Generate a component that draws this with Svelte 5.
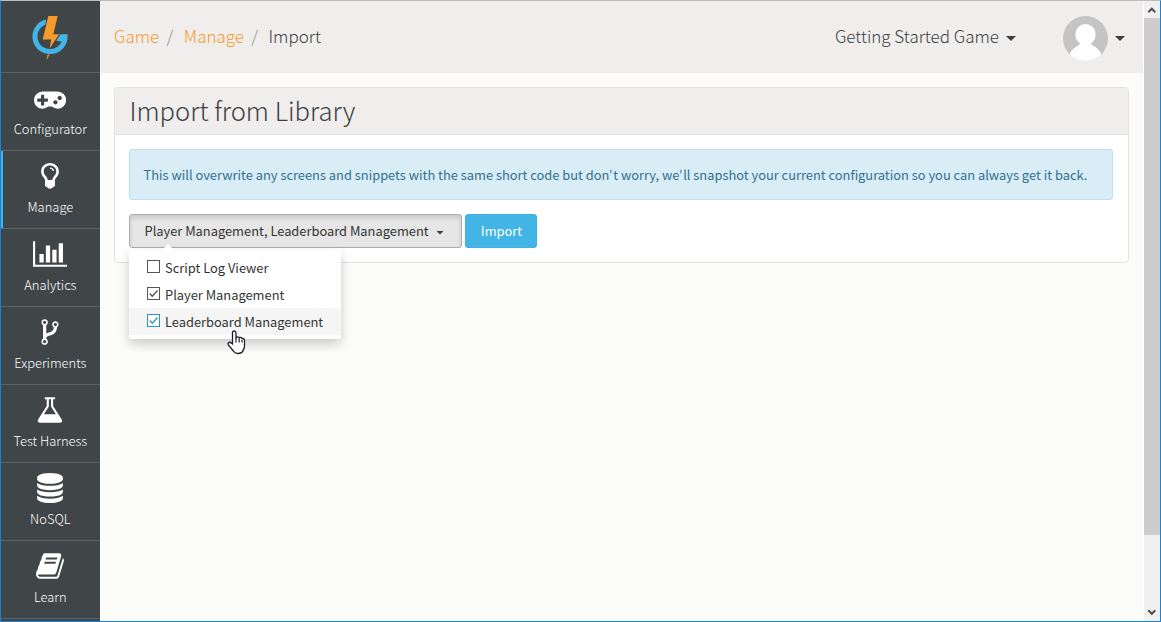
<script>
  const gamepad = 'M832 1088v-128q0-14-9-23t-23-9h-192v-192q0-14-9-23t-23-9h-128q-14 0-23 9t-9 23v192h-192q-14 0-23 9t-9 23v128q0 14 9 23t23 9h192v192q0 14 9 23t23 9h128q14 0 23-9t9-23v-192h192q14 0 23-9t9-23zm576 64q0-53-37.5-90.5t-90.5-37.5-90.5 37.5-37.5 90.5 37.5 90.5 90.5 37.5 90.5-37.5 37.5-90.5zm256-256q0-53-37.5-90.5t-90.5-37.5-90.5 37.5-37.5 90.5 37.5 90.5 90.5 37.5 90.5-37.5 37.5-90.5zm256 128q0 212-150 362t-362 150q-192 0-338-128h-220q-146 128-338 128-212 0-362-150t-150-362 150-362 362-150h896q212 0 362 150t150 362z';
  const bulb = 'M896 120c-300 0-530 215-530 500 0 150 60 240 130 330 65 85 105 150 115 240q-15 30-15 70v190q0 60 60 85l60 25q40 100 180 100t180-100l60-25q60-25 60-85v-190q0-40-15-70c10-90 50-155 115-240 70-90 130-180 130-330 0-285-230-500-530-500zm0 150c215 0 375 150 375 350 0 110-45 175-105 250-65 85-115 150-130 260h-280c-15-110-65-175-130-260-60-75-105-140-105-250 0-200 160-350 375-350zm10 120v75q125 10 160 125h75q-30-190-235-200z';
  const chart = 'M640 896v512h-256v-512h256zm384-512v1024h-256v-1024h256zm1024 1152v128h-2048v-1536h128v1408h1920zm-640-896v768h-256v-768h256zm384-384v1152h-256v-1152h256z';
  const fork = 'M672 1472q0-40-28-68t-68-28-68 28-28 68 28 68 68 28 68-28 28-68zm0-1152q0-40-28-68t-68-28-68 28-28 68 28 68 68 28 68-28 28-68zm640 128q0-40-28-68t-68-28-68 28-28 68 28 68 68 28 68-28 28-68zm96 0q0 52-26 96.5t-70 69.5q-2 287-226 414-67 38-203 81-128 40-169.5 71t-41.5 100v26q44 25 70 69.5t26 96.5q0 80-56 136t-136 56-136-56-56-136q0-52 26-96.5t70-69.5v-820q-44-25-70-69.5t-26-96.5q0-80 56-136t136-56 136 56 56 136q0 52-26 96.5t-70 69.5v497q54-26 154-57 55-17 87.5-29.5t70.5-31 59-39.5 40.5-51 28-69.5 8.5-91.5q-44-25-70-69.5t-26-96.5q0-80 56-136t136-56 136 56 56 136z';
  const flask = 'M1527 1448q56 89 21.5 152.5t-140.5 63.5h-1152q-106 0-140.5-63.5t21.5-152.5l503-793v-399h-64q-26 0-45-19t-19-45 19-45 45-19h512q26 0 45 19t19 45-19 45-45 19h-64v399zm-779-725l-272 429h712l-272-429-20-31v-436h-128v436z';
  const database = 'M896 768q237 0 443-43t325-127v170q0 69-103 128t-280 93.5-385 34.5-385-34.5-280-93.5-103-128v-170q119 84 325 127t443 43zm0 768q237 0 443-43t325-127v170q0 69-103 128t-280 93.5-385 34.5-385-34.5-280-93.5-103-128v-170q119 84 325 127t443 43zm0-384q237 0 443-43t325-127v170q0 69-103 128t-280 93.5-385 34.5-385-34.5-280-93.5-103-128v-170q119 84 325 127t443 43zm0-1152q208 0 385 34.5t280 93.5 103 128v128q0 69-103 128t-280 93.5-385 34.5-385-34.5-280-93.5-103-128v-128q0-69 103-128t280-93.5 385-34.5z';
  const book = 'M1703 478q40 57 18 129l-275 906q-19 64-76.5 107.5t-122.5 43.5h-923q-77 0-148.5-53.5t-99.5-131.5q-24-67-2-127 0-4 3-27t4-37q1-8-3-21.5t-3-19.5q2-11 8-21t16.5-23.5 16.5-23.5q23-38 45-91.5t30-91.5q3-10 .5-30t-.5-28q3-11 17-28t17-23q21-36 42-92t25-90q1-9-2.5-32t.5-28q4-13 22-30.5t22-22.5q19-26 42.5-84.5t27.5-96.5q1-8-3-25.5t-2-26.5q2-8 9-18t18-23 17-21q8-12 16.5-30.5t15-35 16-36 19.5-32 26.5-23.5 36-11.5 47.5 5.5l-1 3q38-9 51-9h761q74 0 114 56t18 130l-274 906q-36 119-71.5 153.5t-128.5 34.5h-869q-27 0-38 15-11 16-1 43 24 70 144 70h923q29 0 56-15.5t35-41.5l300-987q7-22 5-57 38 15 59 43zm-1064 2q-4 13 2 22.5t20 9.5h608q13 0 25.5-9.5t16.5-22.5l21-64q4-13-2-22.5t-20-9.5h-608q-13 0-25.5 9.5t-16.5 22.5zm-83 256q-4 13 2 22.5t20 9.5h608q13 0 25.5-9.5t16.5-22.5l21-64q4-13-2-22.5t-20-9.5h-608q-13 0-25.5 9.5t-16.5 22.5z';

  const nav = [
    { label: 'Configurator', path: gamepad, units: 1920 },
    { label: 'Manage', path: bulb, units: 1792, active: true },
    { label: 'Analytics', path: chart, units: 2048 },
    { label: 'Experiments', path: fork, units: 1792 },
    { label: 'Test Harness', path: flask, units: 1664 },
    { label: 'NoSQL', path: database, units: 1792 },
    { label: 'Learn', path: book, units: 1792 }
  ];

  let options = $state([
    { label: 'Script Log Viewer', checked: false },
    { label: 'Player Management', checked: true },
    { label: 'Leaderboard Management', checked: true, hover: true }
  ]);
  let selected = $derived(options.filter((o) => o.checked).map((o) => o.label).join(', '));
</script>

<div class="window">
  <nav class="sidebar">
    <div class="logo">
      <svg width="40" height="48" viewBox="0 0 40 48">
        <path d="M16.200 8.900A15.100 15.100 0 1 0 35.100 22.500" fill="none" stroke="#42b4e6" stroke-width="5" />
        <path d="M29.300 21.300H37.700L36.500 26L31 28.500L25 27.500Z" fill="#42b4e6" />
        <path d="M17.400 3H28.600L24.300 20.300H31L21 36H18.800L20 27.200H11.500Z" fill="#404547" />
        <path d="M18.300 3H27.700L23.300 21.300H29.200L19.600 35.500L21.200 26.400H12.700Z" fill="#f79a2c" />
        <path d="M17.600 41.600H19.600L16.600 47.200Z" fill="#f79a2c" />
      </svg>
    </div>
    {#each nav as item}
      <a class="item" class:active={item.active} href="#top">
        <svg width={(item.units * 30) / 1792} height="30" viewBox="0 0 {item.units} 1792"><path d={item.path} fill="#fff" /></svg>
        <span>{item.label}</span>
      </a>
    {/each}
  </nav>

  <main>
    <header>
      <div class="crumbs">
        <a href="#top">Game</a><i>/</i><a href="#top">Manage</a><i>/</i><span>Import</span>
      </div>
      <div class="account">
        <span class="game">Getting Started Game</span>
        <b class="caret"></b>
        <svg class="avatar" width="45" height="45" viewBox="0 0 45 45">
          <defs><clipPath id="round"><circle cx="22.5" cy="22.5" r="22.5" /></clipPath></defs>
          <g clip-path="url(#round)">
            <rect width="45" height="45" fill="#c4c4c4" />
            <ellipse cx="22.5" cy="18.5" rx="10.2" ry="10.6" fill="#fff" />
            <path d="M17 27h11q0 2 3 3.3q6 3.200 8.500 10.700v5h-34v-5q2.500-7.500 8.500-10.700q3-1.300 3-3.300z" fill="#fff" />
          </g>
        </svg>
        <b class="caret"></b>
      </div>
    </header>

    <section class="panel">
      <h1><span>Import from Library</span></h1>
      <div class="body">
        <div class="alert"><span>This will overwrite any screens and snippets with the same short code but don<em>’</em>t worry, we<em>’</em>ll snapshot your current configuration so you can always get it back.</span></div>
        <div class="controls">
          <div class="picker">
            <button class="select"><span>{selected}</span><b class="caret"></b></button>
            <div class="menu">
              {#each options as o}
                <label class:hover={o.hover}>
                  <input type="checkbox" bind:checked={o.checked} />
                  <svg width="14" height="14" viewBox="0 0 14 14">
                    <rect x=".5" y=".5" width="12" height="12" fill="#fff" stroke="currentColor" />
                    {#if o.checked}<path d="M2.800 6.500L5.300 9.200L10.500 3.500" fill="none" stroke="currentColor" stroke-width="1.300" />{/if}
                  </svg>
                  <span>{o.label}</span>
                </label>
              {/each}
              <svg class="pointer" width="19" height="25" viewBox="0 0 19 25">
                <path d="M5.500 14V3Q5.500 1 7.200 1T9 3V8.500Q9 6.800 10.600 6.800T12.200 8.500Q12.200 7.300 13.700 7.400T15 9Q15 8.400 16.200 8.500T17.500 10.200V16Q17.500 19 15.800 20.800V21.500Q14 23.500 11 23.500T6.800 21.500L1.500 15.200Q.5 13.500 1.800 12.600T4.200 13Z" fill="#fff" stroke="#1e1e2c" stroke-width="1.300" />
                <path d="M9 8V12.500M12.200 8.500V12.500M15 9.500V12.500" fill="none" stroke="#1e1e2c" stroke-width="1.200" />
              </svg>
            </div>
          </div>
          <button class="import"><span>Import</span></button>
        </div>
      </div>
    </section>
  </main>

  <div class="scroll">
    <svg width="16" height="17" viewBox="0 0 16 17"><path d="M4.300 11.200L7.800 7.700L11.300 11.200" fill="none" stroke="#505050" stroke-width="2" /></svg>
    <div class="thumb"></div>
    <svg class="down" width="16" height="17" viewBox="0 0 16 17"><path d="M4.300 6.300L7.800 9.800L11.300 6.300" fill="none" stroke="#505050" stroke-width="2" /></svg>
  </div>
</div>

<style>
  .window, .window * { box-sizing: border-box; }
  .window {
    width: 1161px; height: 622px; overflow: hidden; display: flex;
    border: 1px solid #1883d7; border-top-color: #bdbcbc;
    background: #fcfcfa; color: #3a3f42;
    font-family: "Noto Sans CJK SC", "Noto Sans", sans-serif; font-size: 12.87px; line-height: 20px;
  }
  span, a, i { white-space: nowrap; }
  a { text-decoration: none; }
  svg { display: block; flex: none; }
  em { font-family: Lato, sans-serif; font-style: normal; line-height: 1; display: inline-block; width: 3.8px; }

  .sidebar { width: 99px; flex: none; background: #404547; overflow: hidden; }
  .logo { height: 72px; border-bottom: 1px solid #5d6264; padding: 12px 0 0 29px; }
  .item {
    height: 78px; padding: 10px .4px 0 0; display: flex; flex-direction: column; align-items: center;
    border-bottom: 1px solid #5d6264; color: #fff;
  }
  .item span { margin-top: 6px; font-weight: 300; font-size: 12.95px; }
  .item.active { box-shadow: inset 2px 0 #42b4e6; }

  main { flex: 1; min-width: 0; }
  header {
    height: 72px; background: #f0eeed; display: flex; justify-content: space-between;
    padding: 0 18px 0 14px; font-size: 17px; font-weight: 300;
  }
  .crumbs { display: flex; align-items: center; padding-bottom: 2px; }
  .crumbs a { color: #f79a2c; }
  .crumbs i { font-style: normal; color: #8b9399; padding: 0 10.500px 0 7.300px; }
  .account { display: flex; align-items: center; }
  .game { margin-top: -2px; }
  .caret { flex: none; width: 10px; height: 5px; background: #3a3f42; clip-path: polygon(0 0, 100% 0, 50% 100%); }
  .game + .caret { margin: 3px 0 0 7px; }
  .avatar { margin: 3px 7px 0 47px; }
  .avatar + .caret { margin-top: 3px; }

  .panel { margin: 14px 14px 0 14px; height: 176px; background: #fff; border: 1px solid #e2e2e2; border-radius: 4px; }
  h1 {
    margin: 0; height: 47px; padding: 0 0 2px 14.500px; display: flex; align-items: center; background: #f0eeed;
    border-bottom: 1px solid #e2e2e2; border-radius: 3px 3px 0 0; font-size: 25.6px; font-weight: 300;
  }
  .body { padding: 14px; }
  .alert {
    height: 51px; width: 984px; padding-left: 13.500px; display: flex; align-items: center;
    background: #d9edf7; border: 1px solid #bcdff1; border-radius: 3px; color: #31708f;
  }
  .controls { display: flex; gap: 3px; margin-top: 14px; }
  .picker { position: relative; }
  button { font: inherit; height: 34px; padding: 0; border-radius: 3px; display: flex; align-items: center; }
  .select {
    width: 333px; padding: 0 17px 0 14.500px; justify-content: space-between; background: #e6e6e6; color: #333;
    border: 1px solid #adadad; box-shadow: inset 0 3px 5px rgba(0, 0, 0, .125);
  }
  .select .caret { width: 8px; height: 4px; margin-top: 3px; }
  .import { width: 72px; padding-left: 1px; justify-content: center; background: #42b4e6; border: 1px solid #3fb0e2; color: #fff; }
  .menu {
    position: absolute; z-index: 2; left: 0; top: 36px; width: 212px; height: 89px; padding: 4px 0;
    background: #fff; border-radius: 3px; box-shadow: 0 5px 12px rgba(0, 0, 0, .2);
  }
  .menu::before {
    content: ""; position: absolute; left: 32px; top: -6px; border: solid transparent; border-width: 0 7px 7px;
    border-bottom-color: #fff;
  }
  label { height: 27px; display: flex; align-items: center; padding-left: 18px; color: #333; }
  label svg { color: #555; margin: -2px 4px 0 0; }
  label.hover { background: #f5f5f5; }
  label.hover svg { color: #2e8ede; }
  input { position: absolute; opacity: 0; width: 0; height: 0; margin: 0; }
  .pointer { position: absolute; left: 98px; top: 80px; }

  .scroll { width: 17px; flex: none; background: #f0f0f0; border-left: 1px solid #fff; display: flex; flex-direction: column; }
  .thumb { height: 517px; background: #cdcdcd; }
  .down { margin-top: auto; }
</style>
